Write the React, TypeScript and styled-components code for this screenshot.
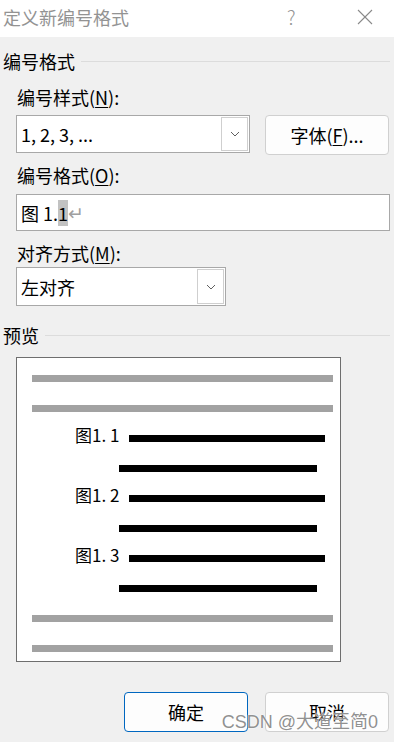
import React from "react";
import styled, { createGlobalStyle } from "styled-components";

const GlobalStyle = createGlobalStyle`
  html, body {
    margin: 0;
    padding: 0;
    background: #f0f0f0;
  }
  body {
    font-family: "Noto Sans CJK SC", "Noto Sans", sans-serif;
    color: #000;
  }
`;

const Dialog = styled.div`
  position: relative;
  width: 394px;
  height: 742px;
  background: #f0f0f0;
  overflow: hidden;
`;

const TitleBar = styled.div`
  height: 37px;
  background: #fff;
  display: flex;
  align-items: center;
  padding-left: 3px;
  font-size: 18px;
  color: #939393;
`;

const TitleText = styled.div`
  flex: 1;
  line-height: 24px;
  margin-top: -3px;
`;

const HelpMark = styled.div`
  width: 20px;
  font-size: 19px;
  font-weight: 300;
  line-height: 24px;
  margin-top: -4px;
  margin-right: 50px;
  color: #939393;
`;

const CloseIcon = styled.svg`
  margin-right: 21px;
  margin-top: -4px;
`;

const Body = styled.div`
  padding: 0 4px 0 3px;
`;

const SectionHeader = styled.div<{ $top: number }>`
  display: flex;
  align-items: center;
  gap: 6px;
  margin-top: ${(p) => p.$top}px;
  font-size: 18px;
  line-height: 24px;
`;

const SectionRule = styled.div`
  flex: 1;
  height: 1px;
  background: #dcdcdc;
`;

const FieldLabel = styled.div<{ $top: number }>`
  margin-top: ${(p) => p.$top}px;
  margin-left: 14px;
  font-size: 18px;
  line-height: 24px;
`;

const Key = styled.span`
  text-decoration: underline;
  text-underline-offset: 2px;
  text-decoration-thickness: 1px;
`;

const Row = styled.div<{ $top: number }>`
  display: flex;
  align-items: flex-start;
  gap: 15px;
  margin-top: ${(p) => p.$top}px;
  margin-left: 13px;
`;

const Select = styled.div<{ $width: number; $height: number }>`
  box-sizing: border-box;
  width: ${(p) => p.$width}px;
  height: ${(p) => p.$height}px;
  background: #fff;
  border: 1px solid #a8a8a8;
  display: flex;
  align-items: center;
  padding: 1px 1px 1px 4px;
  font-size: 18px;
`;

const SelectValue = styled.div`
  flex: 1;
  line-height: 24px;
`;

const DropButton = styled.div`
  box-sizing: border-box;
  width: 27px;
  align-self: stretch;
  border: 1px solid #cfcfcf;
  background: #fff;
  display: flex;
  align-items: center;
  justify-content: center;
`;

const PushButton = styled.button<{ $primary?: boolean; $width: number }>`
  box-sizing: border-box;
  width: ${(p) => p.$width}px;
  height: 40px;
  border-radius: 4px;
  border: 1px solid ${(p) => (p.$primary ? "#0067c0" : "#d0d0d0")};
  background: #fdfdfd;
  font-family: inherit;
  font-size: 18px;
  line-height: 24px;
  color: #000;
  padding: 0;
`;

const TextInput = styled.div`
  box-sizing: border-box;
  margin-top: 7px;
  margin-left: 13px;
  height: 37px;
  background: #fff;
  border: 1px solid #a8a8a8;
  display: flex;
  align-items: center;
  padding-left: 4px;
  font-size: 18px;
  white-space: pre;
`;

const Selected = styled.span`
  background: #c2c2c2;
  display: inline-block;
  line-height: 26px;
`;

const ReturnMark = styled.span`
  color: #a0a0a0;
  font-family: "DejaVu Sans", sans-serif;
  font-size: 19px;
  line-height: 24px;
`;

const PreviewBox = styled.div`
  box-sizing: border-box;
  margin-top: 10px;
  margin-left: 13px;
  width: 325px;
  height: 305px;
  background: #fff;
  border: 1px solid #6e6e6e;
  padding-bottom: 3px;
`;

const PreviewLine = styled.div`
  height: 30px;
  box-sizing: border-box;
  padding-top: 17px;
  display: flex;
  align-items: flex-start;
`;

const Bar = styled.div<{ $left: number; $width: number; $grey?: boolean }>`
  margin-left: ${(p) => p.$left}px;
  width: ${(p) => p.$width}px;
  height: 7px;
  background: ${(p) => (p.$grey ? "#a2a2a2" : "#000")};
`;

const NumberLabel = styled.div`
  margin-left: 58px;
  width: 54px;
  margin-top: -10px;
  font-size: 17px;
  line-height: 20px;
`;

const Footer = styled.div`
  display: flex;
  justify-content: flex-end;
  gap: 17px;
  margin-top: 30px;
  margin-right: 1px;
`;

const Watermark = styled.div`
  position: absolute;
  right: 16px;
  bottom: 8px;
  font-family: "Liberation Sans", "Noto Sans CJK SC", sans-serif;
  font-size: 18px;
  line-height: 24px;
  color: rgba(115, 115, 115, 0.8);
  text-shadow: 0 0 1px #fff, 0 0 2px #fff;
  pointer-events: none;
`;

const Chevron: React.FC = () => (
  <svg width="10" height="6" viewBox="0 0 10 6">
    <polyline points="1,1 5,5 9,1" fill="none" stroke="#606060" strokeWidth="1" />
  </svg>
);

const items = ["图1. 1", "图1. 2", "图1. 3"];

export default function App() {
  return (
    <Dialog>
      <GlobalStyle />
      <TitleBar>
        <TitleText>定义新编号格式</TitleText>
        <HelpMark>?</HelpMark>
        <CloseIcon width="16" height="16" viewBox="0 0 16 16">
          <line x1="1" y1="1" x2="15" y2="15" stroke="#8a8a8a" strokeWidth="1.1" />
          <line x1="15" y1="1" x2="1" y2="15" stroke="#8a8a8a" strokeWidth="1.1" />
        </CloseIcon>
      </TitleBar>

      <Body>
        <SectionHeader $top={12}>
          编号格式
          <SectionRule />
        </SectionHeader>

        <FieldLabel $top={12}>
          编号样式(<Key>N</Key>):
        </FieldLabel>
        <Row $top={6}>
          <Select $width={234} $height={38}>
            <SelectValue>1, 2, 3, ...</SelectValue>
            <DropButton>
              <Chevron />
            </DropButton>
          </Select>
          <PushButton $width={124}>
            字体(<Key>F</Key>)...
          </PushButton>
        </Row>

        <FieldLabel $top={8}>
          编号格式(<Key>O</Key>):
        </FieldLabel>
        <TextInput>
          {"图 1."}
          <Selected>1</Selected>
          <ReturnMark>↵</ReturnMark>
        </TextInput>

        <FieldLabel $top={10}>
          对齐方式(<Key>M</Key>):
        </FieldLabel>
        <Row $top={2}>
          <Select $width={210} $height={39}>
            <SelectValue>左对齐</SelectValue>
            <DropButton>
              <Chevron />
            </DropButton>
          </Select>
        </Row>

        <SectionHeader $top={17}>
          预览
          <SectionRule />
        </SectionHeader>

        <PreviewBox>
          <PreviewLine>
            <Bar $grey $left={15} $width={301} />
          </PreviewLine>
          <PreviewLine>
            <Bar $grey $left={15} $width={301} />
          </PreviewLine>
          {items.map((label) => (
            <React.Fragment key={label}>
              <PreviewLine>
                <NumberLabel>{label}</NumberLabel>
                <Bar $left={0} $width={196} />
              </PreviewLine>
              <PreviewLine>
                <Bar $left={102} $width={198} />
              </PreviewLine>
            </React.Fragment>
          ))}
          <PreviewLine>
            <Bar $grey $left={15} $width={301} />
          </PreviewLine>
          <PreviewLine>
            <Bar $grey $left={15} $width={301} />
          </PreviewLine>
        </PreviewBox>

        <Footer>
          <PushButton $primary $width={124}>
            确定
          </PushButton>
          <PushButton $width={124}>取消</PushButton>
        </Footer>
      </Body>

      <Watermark>CSDN @大道至简0</Watermark>
    </Dialog>
  );
}
